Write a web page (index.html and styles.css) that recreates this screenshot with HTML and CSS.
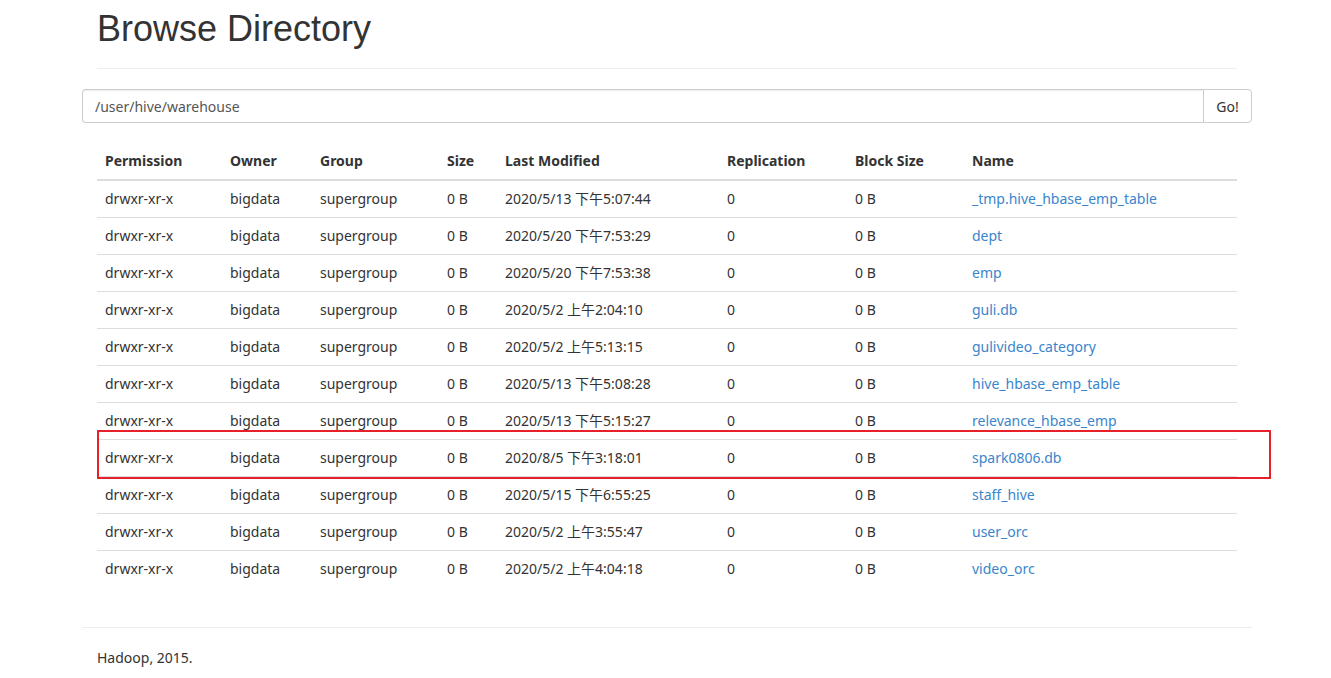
FILE: index.html
```html
<!DOCTYPE html>
<html lang="zh">
<head>
<meta charset="utf-8">
<title>Browse Directory</title>
<link rel="stylesheet" href="styles.css">
</head>
<body>
<div class="container">
  <div class="page-header">
    <h1>Browse Directory</h1>
  </div>
  <form class="dir-form">
    <div class="input-group">
      <input class="form-control" type="text" value="/user/hive/warehouse">
      <button class="btn" type="button">Go!</button>
    </div>
  </form>
  <div class="table-wrap">
    <table class="table">
      <thead>
        <tr>
          <th class="c1">Permission</th><th class="c2">Owner</th><th class="c3">Group</th><th class="c4">Size</th><th class="c5">Last Modified</th><th class="c6">Replication</th><th class="c7">Block Size</th><th class="c8">Name</th>
        </tr>
      </thead>
      <tbody>
        <tr><td>drwxr-xr-x</td><td>bigdata</td><td>supergroup</td><td>0 B</td><td>2020/5/13 下午5:07:44</td><td>0</td><td>0 B</td><td><a href="#">_tmp.hive_hbase_emp_table</a></td></tr>
        <tr><td>drwxr-xr-x</td><td>bigdata</td><td>supergroup</td><td>0 B</td><td>2020/5/20 下午7:53:29</td><td>0</td><td>0 B</td><td><a href="#">dept</a></td></tr>
        <tr><td>drwxr-xr-x</td><td>bigdata</td><td>supergroup</td><td>0 B</td><td>2020/5/20 下午7:53:38</td><td>0</td><td>0 B</td><td><a href="#">emp</a></td></tr>
        <tr><td>drwxr-xr-x</td><td>bigdata</td><td>supergroup</td><td>0 B</td><td>2020/5/2 上午2:04:10</td><td>0</td><td>0 B</td><td><a href="#">guli.db</a></td></tr>
        <tr><td>drwxr-xr-x</td><td>bigdata</td><td>supergroup</td><td>0 B</td><td>2020/5/2 上午5:13:15</td><td>0</td><td>0 B</td><td><a href="#">gulivideo_category</a></td></tr>
        <tr><td>drwxr-xr-x</td><td>bigdata</td><td>supergroup</td><td>0 B</td><td>2020/5/13 下午5:08:28</td><td>0</td><td>0 B</td><td><a href="#">hive_hbase_emp_table</a></td></tr>
        <tr><td>drwxr-xr-x</td><td>bigdata</td><td>supergroup</td><td>0 B</td><td>2020/5/13 下午5:15:27</td><td>0</td><td>0 B</td><td><a href="#">relevance_hbase_emp</a></td></tr>
        <tr><td>drwxr-xr-x</td><td>bigdata</td><td>supergroup</td><td>0 B</td><td>2020/8/5 下午3:18:01</td><td>0</td><td>0 B</td><td><a href="#">spark0806.db</a></td></tr>
        <tr><td>drwxr-xr-x</td><td>bigdata</td><td>supergroup</td><td>0 B</td><td>2020/5/15 下午6:55:25</td><td>0</td><td>0 B</td><td><a href="#">staff_hive</a></td></tr>
        <tr><td>drwxr-xr-x</td><td>bigdata</td><td>supergroup</td><td>0 B</td><td>2020/5/2 上午3:55:47</td><td>0</td><td>0 B</td><td><a href="#">user_orc</a></td></tr>
        <tr><td>drwxr-xr-x</td><td>bigdata</td><td>supergroup</td><td>0 B</td><td>2020/5/2 上午4:04:18</td><td>0</td><td>0 B</td><td><a href="#">video_orc</a></td></tr>
      </tbody>
    </table>
    <div class="highlight"></div>
  </div>
  <hr class="footer-rule">
  <div class="footer">Hadoop, 2015.</div>
</div>
</body>
</html>
```

FILE: styles.css
```css
* { box-sizing: border-box; }
html, body { margin: 0; padding: 0; }
body {
  font-family: "Noto Sans", "Noto Sans CJK SC", sans-serif;
  font-size: 14px;
  line-height: 20px;
  color: #333;
  background: #fff;
  padding-left: 3px;
}
.container {
  width: 1170px;
  margin: 0 auto;
  padding: 0 15px;
}
.page-header {
  margin: 0 0 20px;
  padding-bottom: 9px;
  border-bottom: 1px solid #eee;
}
.page-header h1 {
  margin: 9px 0 10px;
  font-family: "Liberation Sans", Arial, sans-serif;
  font-weight: 500;
  font-size: 36px;
  line-height: 40px;
  color: #333;
}
.dir-form {
  margin: 0 -15px 20px;
}
.input-group {
  display: flex;
  height: 34px;
}
.form-control {
  flex: 1;
  height: 34px;
  padding: 6px 12px;
  font-family: "Noto Sans", "Noto Sans CJK SC", sans-serif;
  font-size: 14px;
  color: #555;
  border: 1px solid #ccc;
  border-right: 0;
  border-radius: 4px 0 0 4px;
  box-shadow: inset 0 1px 1px rgba(0,0,0,.075);
  outline: none;
}
.btn {
  width: 49px;
  height: 34px;
  padding: 6px 0;
  font-family: "Noto Sans", "Noto Sans CJK SC", sans-serif;
  font-size: 14px;
  color: #333;
  background: #fff;
  border: 1px solid #ccc;
  border-radius: 0 4px 4px 0;
}
.table-wrap {
  position: relative;
  margin-bottom: 40px;
}
.table {
  width: 100%;
  border-collapse: collapse;
  table-layout: fixed;
}
.table th, .table td {
  padding: 8px;
  line-height: 20px;
  text-align: left;
  vertical-align: top;
  white-space: nowrap;
}
.table th {
  font-weight: bold;
  border-bottom: 2px solid #ddd;
}
.table td {
  border-top: 1px solid #ddd;
}
.table tbody tr:first-child td { border-top: 0; }
.c1 { width: 125px; }
.c2 { width: 90px; }
.c3 { width: 127px; }
.c4 { width: 58px; }
.c5 { width: 222px; }
.c6 { width: 128px; }
.c7 { width: 117px; }
.c8 { width: 273px; }
.table a {
  color: #3a85cc;
  text-decoration: none;
}
.highlight {
  position: absolute;
  left: 0;
  top: 287px;
  width: 1174px;
  height: 49px;
  border: 2px solid #e8202a;
}
.footer-rule {
  margin: 0 -15px 20px;
  border: 0;
  border-top: 1px solid #eee;
}
.footer {
  line-height: 20px;
  padding-bottom: 20px;
}
```
